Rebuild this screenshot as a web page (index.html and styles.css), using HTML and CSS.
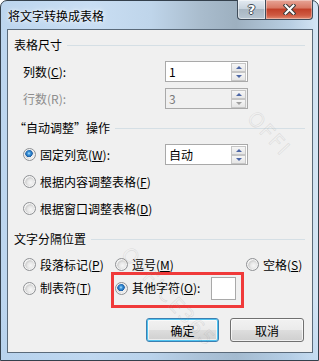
FILE: index.html
```html
<!DOCTYPE html>
<html lang="zh-CN">
<head>
<meta charset="utf-8">
<title>将文字转换成表格</title>
<link rel="stylesheet" href="styles.css">
</head>
<body>
<div class="window">
  <div class="titlebar">
    <span class="title">将文字转换成表格</span>
    <div class="caption-btns">
      <div class="cbtn help"><span>?</span></div>
      <div class="cbtn close">
        <svg width="13" height="11" viewBox="0 0 13 11">
          <path d="M2.5 1.5 L10.5 9.5 M10.5 1.5 L2.5 9.5" stroke="#3b3b3b" stroke-width="4" stroke-linecap="square" fill="none"/>
          <path d="M2.5 1.5 L10.5 9.5 M10.5 1.5 L2.5 9.5" stroke="#ffffff" stroke-width="2" stroke-linecap="square" fill="none"/>
        </svg>
      </div>
    </div>
  </div>
  <div class="client">
    <div class="group-head"><span>表格尺寸</span><i class="rule"></i></div>
    <div class="field-row r1">
      <span class="lbl">列数(<u>C</u>):</span>
      <div class="spin">
        <span class="val">1</span>
        <div class="spin-btns"><b class="sb up"></b><b class="sb down"></b></div>
      </div>
    </div>
    <div class="field-row r2 disabled">
      <span class="lbl">行数(R):</span>
      <div class="spin">
        <span class="val">3</span>
        <div class="spin-btns"><b class="sb up"></b><b class="sb down off"></b></div>
      </div>
    </div>

    <div class="group-head g2"><span>“自动调整”操作</span><i class="rule"></i></div>
    <div class="field-row r3">
      <label class="opt"><i class="radio on"></i><span>固定列宽(<u>W</u>):</span></label>
      <div class="spin">
        <span class="val">自动</span>
        <div class="spin-btns"><b class="sb up"></b><b class="sb down"></b></div>
      </div>
    </div>
    <div class="opt-row r4">
      <label class="opt"><i class="radio"></i><span>根据内容调整表格(<u>F</u>)</span></label>
    </div>
    <div class="opt-row r5">
      <label class="opt"><i class="radio"></i><span>根据窗口调整表格(<u>D</u>)</span></label>
    </div>

    <div class="group-head g3"><span>文字分隔位置</span><i class="rule"></i></div>
    <div class="sep-grid">
      <label class="opt ra"><i class="radio"></i><span>段落标记(<u>P</u>)</span></label>
      <label class="opt ra"><i class="radio"></i><span>逗号(<u>M</u>)</span></label>
      <label class="opt ra"><i class="radio"></i><span>空格(<u>S</u>)</span></label>
      <label class="opt rb"><i class="radio"></i><span>制表符(<u>T</u>)</span></label>
      <label class="opt rb other"><i class="radio on"></i><span>其他字符(<u>O</u>):</span><span class="charbox"></span></label>
    </div>

    <div class="buttons">
      <button class="btn default">确定</button>
      <button class="btn">取消</button>
    </div>

    <div class="highlight"></div>
    <div class="wm wm1">OFFI</div>
    <div class="wm wm2">OFFICE365</div>
  </div>
</div>
</body>
</html>
```

FILE: styles.css
```css
* { box-sizing: border-box; }

html, body {
  margin: 0;
  padding: 0;
  width: 319px;
  height: 361px;
  overflow: hidden;
  background: #ffffff;
}

body {
  font-family: "Noto Sans CJK SC", "Noto Sans", sans-serif;
  font-size: 12px;
  color: #000;
}

.window {
  width: 319px;
  height: 361px;
  border: 1px solid #34404c;
  border-radius: 7px 7px 0 0;
  background:
    linear-gradient(to bottom, rgba(255,255,255,0) 0, rgba(255,255,255,0) 300px, rgba(175,205,235,0.4) 361px),
    linear-gradient(to right, #bcd5ee 0, #c9def3 90px, #bfd5ea 150px, #a9bccd 200px, #9db0c0 235px, #b9cfe3 290px, #d5e6f6 318px);
  display: flex;
  flex-direction: column;
  padding: 0 5px 7px 6px;
}

.titlebar {
  height: 28px;
  flex: none;
  display: flex;
  align-items: flex-start;
  justify-content: space-between;
}

.title {
  padding-left: 1px;
  margin-top: 6px;
  line-height: 18px;
  font-size: 12px;
  color: #000;
  text-shadow: 0 0 6px rgba(255,255,255,0.9), 0 0 3px rgba(255,255,255,0.9);
}

.caption-btns {
  display: flex;
  margin-top: -1px;
  margin-right: 0;
}

.cbtn {
  height: 20px;
  border: 1px solid #3f4c5a;
  border-top: none;
  display: flex;
  align-items: center;
  justify-content: center;
}

.help {
  width: 28px;
  border-radius: 0 0 0 4px;
  border-right: none;
  background: linear-gradient(to bottom, #e4ebf2 0, #c9d4de 45%, #a9b7c3 50%, #b8c6d2 100%);
  box-shadow: inset 0 0 0 1px rgba(255,255,255,0.5);
}

.help span {
  font-family: "DejaVu Sans", sans-serif;
  font-weight: bold;
  font-size: 13px;
  line-height: 13px;
  color: #fff;
  text-shadow: 1px 0 0 #404a55, -1px 0 0 #404a55, 0 1px 0 #404a55, 0 -1px 0 #404a55;
}

.close {
  width: 48px;
  border-radius: 0 0 4px 0;
  background: linear-gradient(to bottom, #e7a597 0, #d97a66 40%, #c2412a 50%, #cf5a42 80%, #e28a70 100%);
  box-shadow: inset 0 0 0 1px rgba(255,255,255,0.35);
}

.client {
  position: relative;
  flex: 1;
  border: 1px solid #5a6a7a;
  background: #f0f0f0;
  padding: 7px 7px 0 6px;
  display: flex;
  flex-direction: column;
  overflow: hidden;
}

.group-head {
  display: flex;
  align-items: center;
  height: 16px;
  line-height: 16px;
  color: #000;
}

.group-head .rule {
  flex: 1;
  height: 1px;
  margin-left: 5px;
  background: #d5dfe5;
}

.g2 { margin-top: 11px; }
.g3 { margin-top: 12px; }

.field-row {
  display: flex;
  align-items: center;
  height: 21px;
  padding-left: 9px;
}

.field-row .lbl,
.field-row .opt {
  width: 142px;
  flex: none;
}

.r1 { margin-top: 8px; }
.r2 { margin-top: 6px; }
.r3 { margin-top: 8px; }
.r4 { margin-top: 6px; }
.r5 { margin-top: 6px; }

.disabled .lbl { color: #8d8d8d; }

.spin {
  width: 83px;
  height: 21px;
  border: 1px solid #a9a9a9;
  background: #fff;
  display: flex;
  align-items: center;
  justify-content: space-between;
}

.disabled .spin { background: #f0f0f0; }

.spin .val {
  padding-left: 3px;
  line-height: 19px;
}

.disabled .spin .val { color: #7a7a7a; }

.spin-btns {
  width: 16px;
  height: 19px;
  padding: 1px 1px 0 0;
  display: flex;
  flex-direction: column;
  align-self: flex-start;
}

.sb {
  display: flex;
  align-items: center;
  justify-content: center;
  height: 9px;
  border: 1px solid #c6c6c6;
  background: linear-gradient(to bottom, #f6f6f6 0, #e6e6e6 100%);
}

.sb::before {
  content: "";
  width: 0;
  height: 0;
  border-left: 3.5px solid transparent;
  border-right: 3.5px solid transparent;
}

.sb.up::before { border-bottom: 3px solid #4d67a6; }
.sb.down::before { border-top: 3px solid #4d67a6; }
.sb.down.off::before { border-top-color: #a0a0a0; }

.opt-row {
  display: flex;
  align-items: center;
  height: 21px;
  padding-left: 9px;
}

.opt {
  display: flex;
  align-items: center;
  line-height: 16px;
  white-space: nowrap;
}

.radio {
  width: 13px;
  height: 13px;
  flex: none;
  border-radius: 50%;
  border: 1px solid #8f9194;
  margin-right: 4px;
  background: radial-gradient(circle at 60% 60%, #f6f6f6 0, #e8e8e8 3px, #cfcfcf 5px, #f2f2f2 6px);
  box-shadow: inset 0 0 0 1px #f4f4f4;
}

.radio.on {
  background:
    radial-gradient(circle at 45% 40%, #b9e6ff 0, #3e97dc 1.5px, #1b5fa8 3.5px, rgba(0,0,0,0) 4px),
    radial-gradient(circle at 60% 60%, #f6f6f6 0, #e8e8e8 3px, #cfcfcf 5px, #f2f2f2 6px);
}

.sep-grid {
  display: grid;
  grid-template-columns: 92px 131px 1fr;
  grid-template-rows: 21px 22px;
  row-gap: 2px;
  margin-top: 7px;
  padding-left: 9px;
}

.sep-grid .opt { height: 100%; }
.sep-grid .other { grid-column: 2 / 4; }

.charbox {
  width: 25px;
  height: 23px;
  margin-left: 11px;
  border: 1px solid #a9a9a9;
  background: #fff;
}

.buttons {
  display: flex;
  justify-content: flex-end;
  gap: 11px;
  margin-top: 19px;
  margin-right: 1px;
}

.btn {
  width: 74px;
  height: 24px;
  padding: 0;
  font-family: "Noto Sans CJK SC", "Noto Sans", sans-serif;
  font-size: 12px;
  color: #000;
  border: 1px solid #707070;
  border-radius: 3px;
  background: linear-gradient(to bottom, #f2f2f2 0, #ebebeb 48%, #dddddd 52%, #cfcfcf 100%);
  box-shadow: inset 0 0 0 1px rgba(255,255,255,0.7);
}

.btn.default {
  width: 73px;
  border-color: #3c7fb1;
  box-shadow: inset 0 0 0 1px #4ec3f0, inset 0 0 0 2px rgba(255,255,255,0.6);
}

.highlight {
  position: absolute;
  left: 103px;
  top: 242px;
  width: 133px;
  height: 36px;
  border: 3px solid #f03a3a;
  pointer-events: none;
}

.wm {
  position: absolute;
  font-family: "DejaVu Sans", sans-serif;
  font-size: 20px;
  letter-spacing: 2px;
  color: transparent;
  -webkit-text-stroke: 0.6px rgba(150,150,150,0.25);
  transform-origin: 0 0;
  transform: rotate(47deg);
  white-space: nowrap;
  pointer-events: none;
}

.wm1 { left: 252px; top: 76px; }
.wm2 { left: 126px; top: 212px; }
```
